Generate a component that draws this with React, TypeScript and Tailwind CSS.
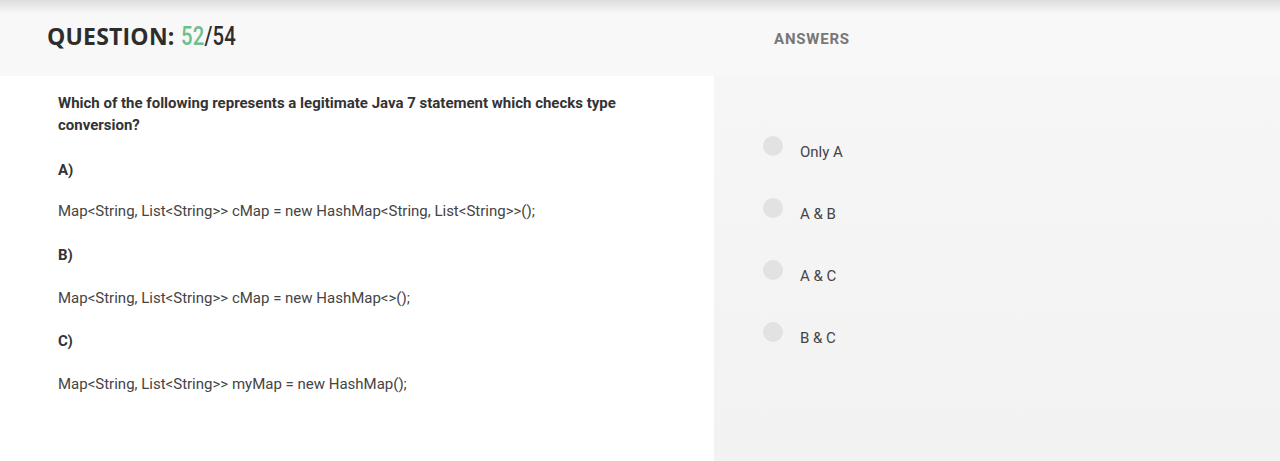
const answers = ["Only A", "A & B", "A & C", "B & C"];

export default function App() {
  return (
    <div className="relative flex h-[461px] w-full overflow-hidden bg-[#f8f8f8] font-['Roboto',sans-serif]">
      <div className="pointer-events-none absolute inset-x-0 top-0 h-[14px] bg-gradient-to-b from-[#dedede] to-[#f8f8f8]/0" />

      <section className="flex w-[714px] shrink-0 flex-col">
        <header className="flex h-[76px] items-center pb-[3px] pl-[47px]">
          <h1 className="text-[23px] font-bold tracking-[0.2px] text-[#2d2d2d] font-['Open_Sans',sans-serif]">
            QUESTION:{" "}
            <span className="inline-block origin-left scale-x-[0.78] font-['Roboto',sans-serif] text-[26px] font-medium">
              <span className="text-[#6dbf8b]">52</span>/54
            </span>
          </h1>
        </header>
        <div className="flex-1 bg-white pl-[58px] pr-[90px] pt-[16px] text-[15px] text-[#444]">
          <p className="font-bold leading-[22px] text-[#333]">
            Which of the following represents a legitimate Java 7 statement which checks type conversion?
          </p>
          <p className="mt-[23px] font-bold leading-[22px] text-[#333]">A)</p>
          <p className="mt-[19px] leading-[22px]">Map&lt;String, List&lt;String&gt;&gt; cMap = new HashMap&lt;String, List&lt;String&gt;&gt;();</p>
          <p className="mt-[22px] font-bold leading-[22px] text-[#333]">B)</p>
          <p className="mt-[21px] leading-[22px]">Map&lt;String, List&lt;String&gt;&gt; cMap = new HashMap&lt;&gt;();</p>
          <p className="mt-[21px] font-bold leading-[22px] text-[#333]">C)</p>
          <p className="mt-[21px] leading-[22px]">Map&lt;String, List&lt;String&gt;&gt; myMap = new HashMap();</p>
        </div>
      </section>

      <section className="flex flex-1 flex-col">
        <header className="flex h-[76px] items-center pl-[60px] pt-[2px]">
          <h2 className="text-[15px] font-bold uppercase tracking-[0.8px] text-[#777]">Answers</h2>
        </header>
        <div className="flex-1 bg-gradient-to-b from-[#f6f6f6] to-[#f2f2f2] pl-[49px] pt-[65px]">
          <ul className="flex flex-col gap-[40px]">
            {answers.map((a) => (
              <li key={a} className="flex h-[22px] items-start gap-[17px]">
                <span className="mt-[-5px] h-[20px] w-[20px] rounded-full bg-[#e2e2e2]" />
                <span className="text-[15px] leading-[22px] text-[#444]">{a}</span>
              </li>
            ))}
          </ul>
        </div>
      </section>
    </div>
  );
}
